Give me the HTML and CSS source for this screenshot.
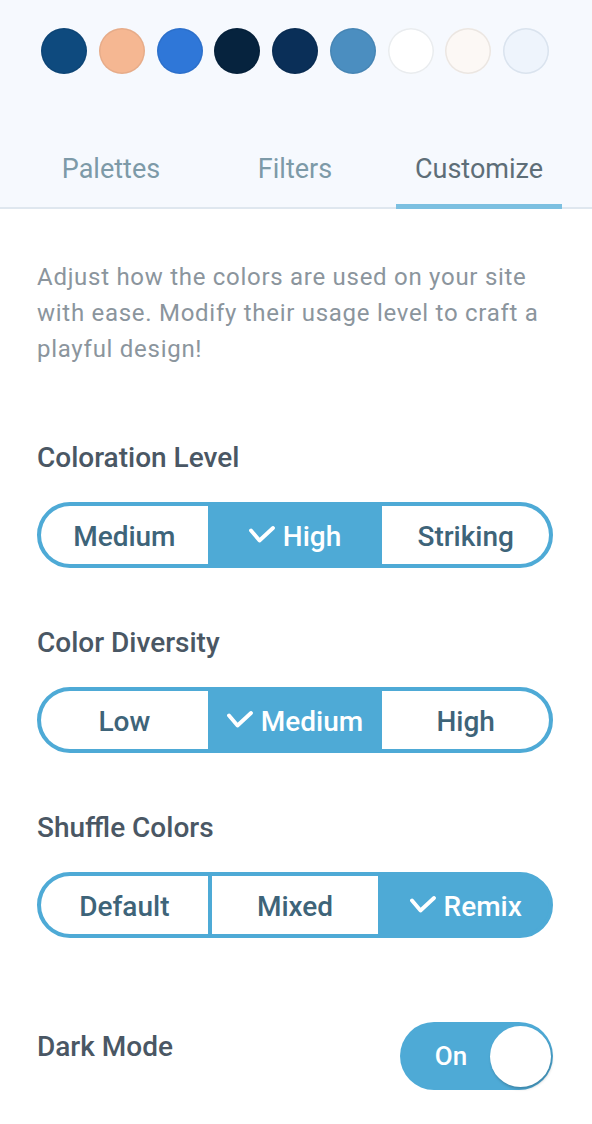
FILE: index.html
```html
<!DOCTYPE html>
<html lang="en">
<head>
<meta charset="utf-8">
<title>Customize</title>
<link rel="stylesheet" href="styles.css">
</head>
<body>
<header class="header">
  <div class="swatches">
    <span class="swatch s1"></span>
    <span class="swatch s2"></span>
    <span class="swatch s3"></span>
    <span class="swatch s4"></span>
    <span class="swatch s5"></span>
    <span class="swatch s6"></span>
    <span class="swatch s7"></span>
    <span class="swatch s8"></span>
    <span class="swatch s9"></span>
  </div>
  <nav class="tabs">
    <span class="tab">Palettes</span>
    <span class="tab">Filters</span>
    <span class="tab active">Customize</span>
  </nav>
</header>
<main class="content">
  <p class="intro">Adjust how the colors are used on your site with ease. Modify their usage level to craft a playful design!</p>

  <section class="setting">
    <h2 class="setting-title">Coloration Level</h2>
    <div class="segmented">
      <span class="seg">Medium</span>
      <span class="seg selected"><svg class="check" viewBox="0 0 26 18" width="26" height="18"><path d="M2 4.5 L10.5 14.5 L24 2" fill="none" stroke="#fff" stroke-width="3.8" stroke-linecap="round" stroke-linejoin="round"/></svg>High</span>
      <span class="seg">Striking</span>
    </div>
  </section>

  <section class="setting">
    <h2 class="setting-title">Color Diversity</h2>
    <div class="segmented">
      <span class="seg">Low</span>
      <span class="seg selected"><svg class="check" viewBox="0 0 26 18" width="26" height="18"><path d="M2 4.5 L10.5 14.5 L24 2" fill="none" stroke="#fff" stroke-width="3.8" stroke-linecap="round" stroke-linejoin="round"/></svg>Medium</span>
      <span class="seg">High</span>
    </div>
  </section>

  <section class="setting">
    <h2 class="setting-title">Shuffle Colors</h2>
    <div class="segmented">
      <span class="seg">Default</span>
      <span class="seg">Mixed</span>
      <span class="seg selected"><svg class="check" viewBox="0 0 26 18" width="26" height="18"><path d="M2 4.5 L10.5 14.5 L24 2" fill="none" stroke="#fff" stroke-width="3.8" stroke-linecap="round" stroke-linejoin="round"/></svg>Remix</span>
    </div>
  </section>

  <div class="toggle-row">
    <span class="toggle-label">Dark Mode</span>
    <div class="toggle">
      <span class="toggle-text">On</span>
      <span class="knob"></span>
    </div>
  </div>
</main>
</body>
</html>
```
FILE: styles.css
```css
* {
  box-sizing: border-box;
}

body {
  margin: 0;
  background: #ffffff;
  font-family: Roboto, "Noto Sans", sans-serif;
}

.header {
  background: #f6f9fe;
  padding-top: 28px;
}

.swatches {
  display: flex;
  justify-content: space-between;
  width: 508px;
  margin-left: 41px;
  height: 46px;
}

.swatch {
  width: 46px;
  height: 46px;
  border-radius: 50%;
  box-shadow: inset 0 0 0 1.5px rgba(0, 0, 0, 0.06);
}

.s1 { background: #0e4a7e; }
.s2 { background: #f5b792; }
.s3 { background: #2f77d8; }
.s4 { background: #06233e; }
.s5 { background: #0a2f58; }
.s6 { background: #4b8ec0; }
.s7 { background: #ffffff; box-shadow: inset 0 0 0 1.5px #e9ecef; }
.s8 { background: #fcf8f5; box-shadow: inset 0 0 0 1.5px #ebe6e2; }
.s9 { background: #eef4fc; box-shadow: inset 0 0 0 1.5px #dae3ee; }

.tabs {
  display: flex;
  gap: 18px;
  padding: 0 30px 0 28px;
  margin-top: 79px;
  border-bottom: 2px solid #dfe7ef;
}

.tab {
  flex: 1;
  text-align: center;
  font-size: 27px;
  line-height: 32px;
  color: #7d9aa8;
  padding-bottom: 19px;
  border-bottom: 5px solid transparent;
  margin-bottom: -2px;
}

.tab.active {
  color: #5e6e78;
  border-bottom-color: #7cc0e1;
}

.content {
  padding: 50px 39px 40px 37px;
}

.intro {
  margin: 0;
  font-size: 24px;
  line-height: 36px;
  letter-spacing: 0.72px;
  color: #8b959d;
}

.setting {
  margin-top: 59px;
}

.intro + .setting {
  margin-top: 75px;
}

.setting-title {
  margin: 0 0 28px;
  font-size: 28px;
  line-height: 32px;
  font-weight: 500;
  color: #4a5764;
}

.segmented {
  display: flex;
  height: 66px;
  border: 4px solid #4eaad6;
  border-radius: 33px;
  overflow: hidden;
  background: #4eaad6;
}

.seg {
  flex: 1;
  display: flex;
  align-items: center;
  justify-content: center;
  gap: 8px;
  padding-top: 2px;
  font-size: 28px;
  font-weight: 500;
  color: #3e6479;
  background: #ffffff;
}

.seg + .seg {
  border-left: 4px solid #4eaad6;
  background-clip: padding-box;
}

.seg.selected {
  background: #4eaad6;
  color: #ffffff;
}

.check {
  display: block;
  margin-top: -2px;
}

.toggle-row {
  display: flex;
  justify-content: space-between;
  align-items: flex-start;
  margin-top: 84px;
}

.toggle-label {
  padding-top: 9px;
  font-size: 28px;
  line-height: 32px;
  font-weight: 500;
  color: #4a5764;
}

.toggle {
  display: flex;
  align-items: center;
  width: 153px;
  height: 68px;
  border-radius: 34px;
  background: #4eaad6;
  padding-right: 2px;
}

.toggle-text {
  flex: 1;
  text-align: center;
  padding-left: 12px;
  font-size: 26px;
  line-height: 32px;
  font-weight: 500;
  color: #ffffff;
}

.knob {
  width: 61px;
  height: 61px;
  border-radius: 50%;
  background: #ffffff;
  box-shadow: 1px 2px 3px rgba(0, 0, 0, 0.22);
}
```
